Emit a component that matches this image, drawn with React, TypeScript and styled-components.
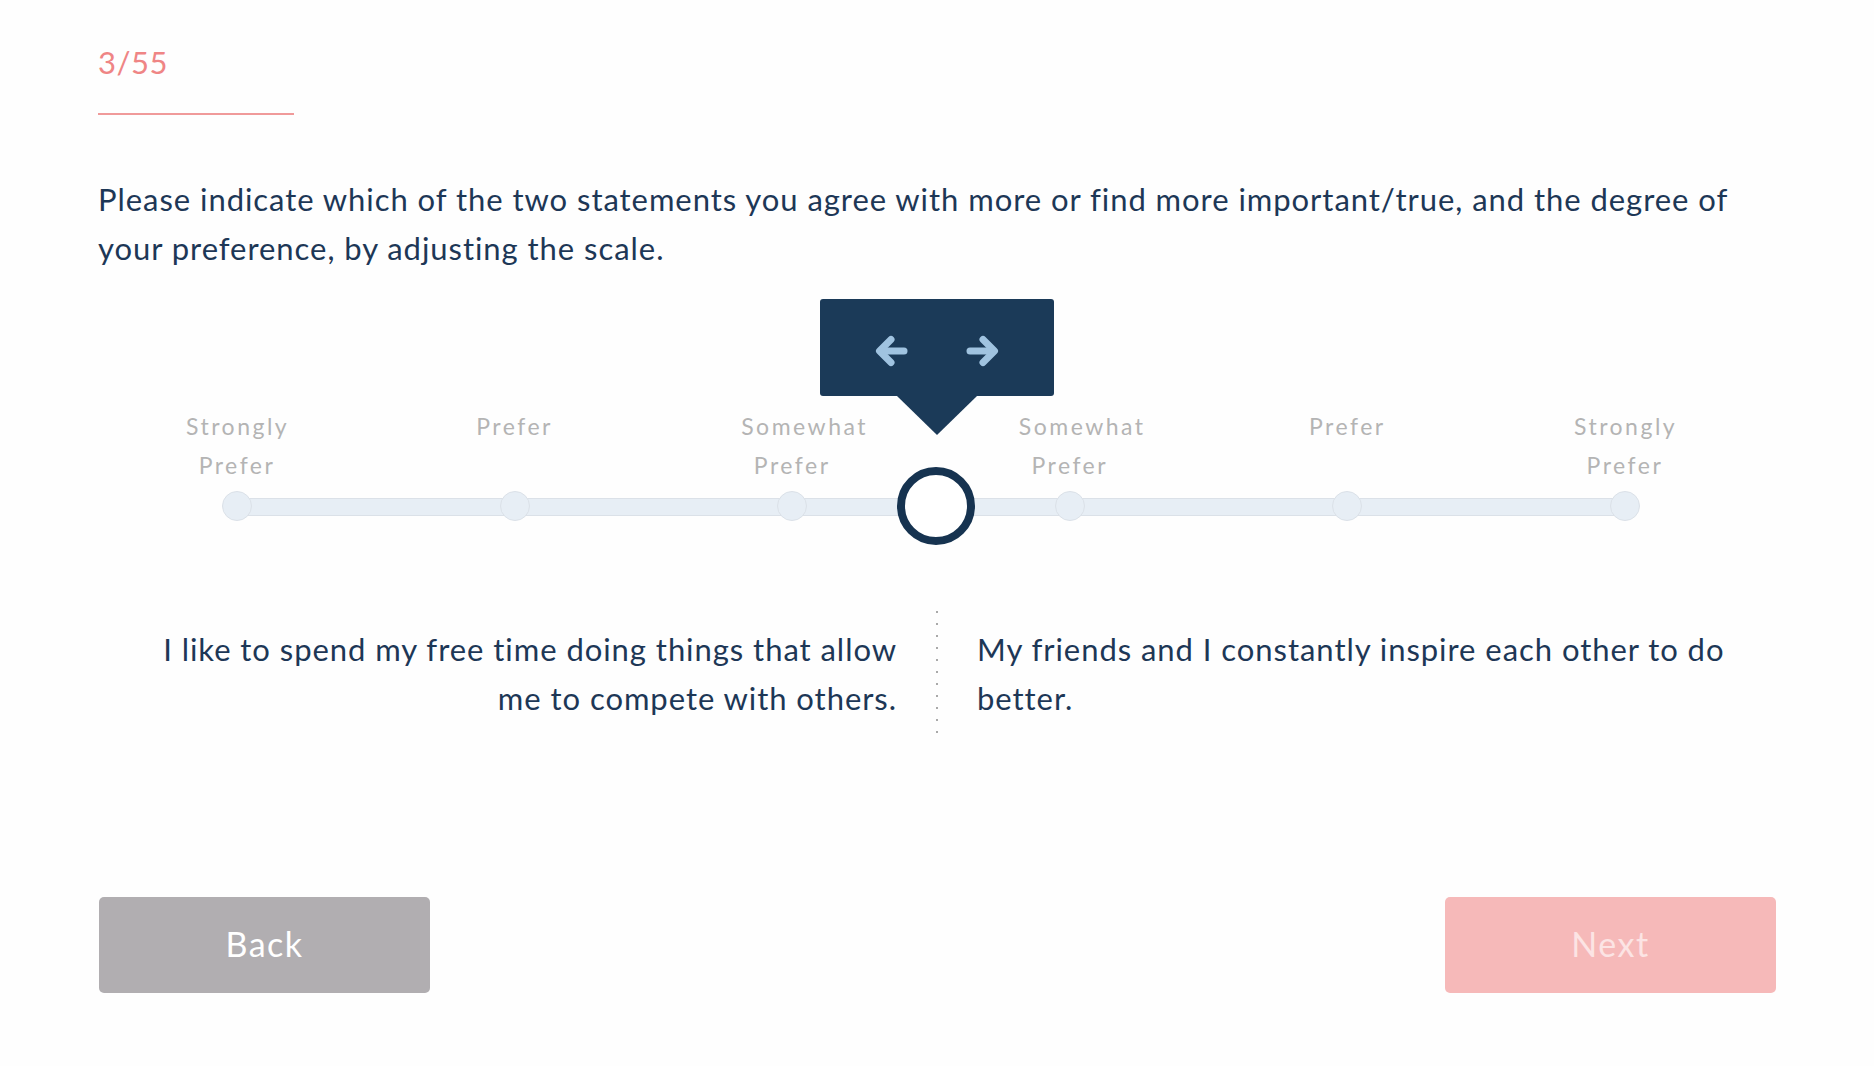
import React from "react";
import styled, { createGlobalStyle } from "styled-components";

const GlobalStyle = createGlobalStyle`
  html, body {
    margin: 0;
    padding: 0;
    background: #fefefe;
  }
  body {
    font-family: Lato, "Open Sans", "Liberation Sans", sans-serif;
    color: #1d3756;
  }
  * { box-sizing: border-box; }
`;

const Page = styled.div`
  width: 1874px;
  min-height: 1066px;
  padding: 44px 98px 0 98px;
  display: flex;
  flex-direction: column;
`;

const Counter = styled.div`
  width: 196px;
  font-size: 31px;
  line-height: 1.2;
  color: #ef8585;
  padding-bottom: 32px;
  border-bottom: 2px solid #f09a9a;
  letter-spacing: 0.5px;
`;

const Instructions = styled.p`
  margin: 60px 0 0 0;
  font-size: 31px;
  line-height: 49px;
  letter-spacing: 0.95px;
  color: #1d3756;
`;

const ScaleWrap = styled.div`
  position: relative;
  width: 1418px;
  margin: 134px 0 0 124px;
`;

const StopsRow = styled.div`
  display: flex;
  justify-content: space-between;
`;

const LabelCell = styled.div`
  width: 30px;
  display: flex;
  flex-direction: column;
  align-items: center;
`;

const Label = styled.div`
  width: 102px;
  flex-shrink: 0;
  text-align: center;
  font-size: 23px;
  line-height: 39px;
  letter-spacing: 2.5px;
  color: #b4b4b4;
  height: 78px;
`;

const Track = styled.div`
  position: relative;
  margin-top: 5px;
  height: 32px;
  display: flex;
  justify-content: space-between;
  align-items: center;

  &::before {
    content: "";
    position: absolute;
    left: 15px;
    right: 15px;
    top: 8px;
    height: 16px;
    background: #e7eef5;
    border-top: 1px solid #dbe1e8;
    border-bottom: 1px solid #dbe1e8;
  }
`;

const Dot = styled.div`
  position: relative;
  width: 30px;
  height: 30px;
  border-radius: 50%;
  background: #e7eef5;
  border: 1px solid #dbe1e8;
`;

const Knob = styled.div`
  position: absolute;
  left: calc(50% + 5px);
  top: 50%;
  width: 78px;
  height: 78px;
  margin: -39px 0 0 -39px;
  border-radius: 50%;
  background: #ffffff;
  border: 8px solid #163350;
  z-index: 2;
`;

const Tooltip = styled.div`
  position: absolute;
  left: calc(50% + 6px);
  bottom: 126px;
  transform: translateX(-50%);
  width: 234px;
  height: 97px;
  background: #1b3a58;
  border-radius: 3px;
  display: flex;
  align-items: center;
  justify-content: center;
  gap: 56px;
  padding-top: 6px;

  &::after {
    content: "";
    position: absolute;
    left: 50%;
    top: 100%;
    margin-left: -40px;
    border-left: 40px solid transparent;
    border-right: 40px solid transparent;
    border-top: 39px solid #1b3a58;
  }
`;

const ArrowIcon = styled.svg`
  width: 36px;
  height: 36px;
  display: block;
`;

const Arrow = ({ dir }: { dir: "left" | "right" }) => (
  <ArrowIcon viewBox="0 0 36 36">
    <g
      transform={dir === "right" ? "matrix(-1 0 0 1 36 0)" : undefined}
      fill="none"
      stroke="#a0c3e0"
      strokeWidth={7}
      strokeLinecap="round"
      strokeLinejoin="round"
    >
      <path d="M31 18 H8" />
      <path d="M18 6.5 L6.5 18 L18 29.5" />
    </g>
  </ArrowIcon>
);

const Statements = styled.div`
  display: grid;
  grid-template-columns: 1fr 2px 1fr;
  column-gap: 39px;
  margin-top: 84px;
  height: 136px;
`;

const Statement = styled.p<{ $side: "left" | "right" }>`
  margin: 0;
  padding-top: 19px;
  width: 764px;
  justify-self: ${(p) => (p.$side === "left" ? "end" : "start")};
  text-align: ${(p) => (p.$side === "left" ? "right" : "left")};
  font-size: 31px;
  line-height: 49px;
  letter-spacing: 0.95px;
  color: #1d3756;
`;

const Divider = styled.div`
  width: 2px;
  background-image: radial-gradient(circle, #a9a9a9 0.9px, transparent 1.2px);
  background-size: 2px 12px;
  background-repeat: repeat-y;
  background-position: 0 0;
`;

const Footer = styled.div`
  display: flex;
  justify-content: space-between;
  margin-top: 155px;
  padding-left: 1px;
`;

const Button = styled.button<{ $variant: "back" | "next" }>`
  width: 331px;
  height: 96px;
  border: none;
  border-radius: 5px;
  padding: 0 0 4px 0;
  font-family: Lato, "Open Sans", "Liberation Sans", sans-serif;
  font-size: 34px;
  letter-spacing: 1.5px;
  cursor: pointer;
  background: ${(p) => (p.$variant === "back" ? "#b1aeb1" : "#f6b9b9")};
  color: ${(p) => (p.$variant === "back" ? "#ffffff" : "#fce4e4")};
`;

const stops = [
  "Strongly Prefer",
  "Prefer",
  "Somewhat Prefer",
  "Somewhat Prefer",
  "Prefer",
  "Strongly Prefer",
];

export default function App() {
  return (
    <>
      <GlobalStyle />
      <Page>
        <Counter>3/55</Counter>
        <Instructions>
          Please indicate which of the two statements you agree with more or find more
          important/true, and the degree of your preference, by adjusting the scale.
        </Instructions>
        <ScaleWrap>
          <StopsRow>
            {stops.map((s, i) => (
              <LabelCell key={i}>
                <Label>{s}</Label>
              </LabelCell>
            ))}
          </StopsRow>
          <Track>
            {stops.map((_, i) => (
              <Dot key={i} />
            ))}
            <Knob />
            <Tooltip>
              <Arrow dir="left" />
              <Arrow dir="right" />
            </Tooltip>
          </Track>
        </ScaleWrap>
        <Statements>
          <Statement $side="left">
            I like to spend my free time doing things that allow me to compete with others.
          </Statement>
          <Divider />
          <Statement $side="right">
            My friends and I constantly inspire each other to do better.
          </Statement>
        </Statements>
        <Footer>
          <Button $variant="back">Back</Button>
          <Button $variant="next">Next</Button>
        </Footer>
      </Page>
    </>
  );
}
